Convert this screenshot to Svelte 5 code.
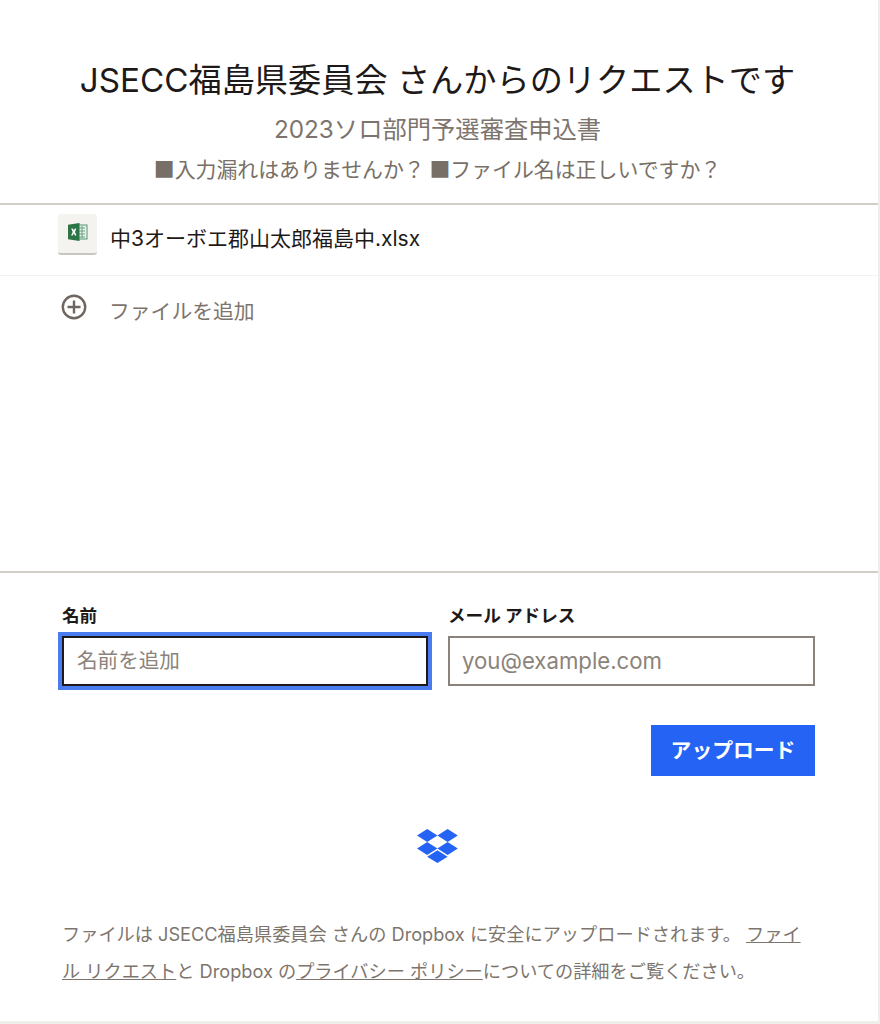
<script lang="ts">
  const fileName = "中3オーボエ郡山太郎福島中.xlsx";
</script>

<div class="card">
  <header class="head">
    <h1>JSECC福島県委員会 さんからのリクエストです</h1>
    <h2>2023ソロ部門予選審査申込書</h2>
    <p>■入力漏れはありませんか？ ■ファイル名は正しいですか？</p>
  </header>

  <section class="files">
    <div class="file-row">
      <div class="file-icon">
        <svg width="20" height="18" viewBox="0 0 20 18">
          <rect x="8" y="2" width="11" height="14" fill="#e9f0ea" stroke="#2f7d4f" stroke-width="0.8" />
          <path d="M11 5h6M11 8h6M11 11h6M11 14h6M14 3v12" stroke="#5f9c78" stroke-width="0.9" fill="none" />
          <path d="M0 1.8 11.5 0v18L0 16.2z" fill="#2a7445" />
          <path d="M3.2 5.5h1.6l1 2 1-2h1.5L7 9l1.5 3.5H6.9l-1.1-2.2-1.1 2.2H3.1L4.7 9z" fill="#fff" />
        </svg>
      </div>
      <span class="file-name">{fileName}</span>
    </div>
    <button class="add-row" type="button">
      <svg class="plus" width="26" height="26" viewBox="0 0 26 26" fill="none" stroke="#6f675f" stroke-width="2.4">
        <circle cx="13" cy="13" r="11.2" />
        <path d="M13 6.5v13M6.5 13h13" />
      </svg>
      <span>ファイルを追加</span>
    </button>
  </section>

  <section class="form">
    <div class="fields">
      <label class="field">
        <span>名前</span>
        <input class="focused" type="text" placeholder="名前を追加" />
      </label>
      <label class="field">
        <span>メール アドレス</span>
        <input class="email" type="text" placeholder="you@example.com" />
      </label>
    </div>
    <div class="actions">
      <button class="upload" type="button">アップロード</button>
    </div>
    <div class="logo">
      <svg width="41" height="34" viewBox="0 0 41 34" fill="#2563f5">
        <path d="M10.2 0 20.4 6.5 10.2 13 0 6.5z" />
        <path d="M30.6 0 40.8 6.5 30.6 13 20.4 6.5z" />
        <path d="M10.2 13 20.4 19.5 10.2 26 0 19.5z" />
        <path d="M30.6 13 40.8 19.5 30.6 26 20.4 19.5z" />
        <path d="M20.4 21.2 30.6 27.7 20.4 34 10.2 27.7z" />
      </svg>
    </div>
    <p class="note">
      ファイルは JSECC福島県委員会 さんの Dropbox に安全にアップロードされます。 <a href="#terms">ファイル リクエスト</a>と Dropbox の<a href="#privacy">プライバシー ポリシー</a>についての詳細をご覧ください。
    </p>
  </section>
</div>

<style>
  :global(body) {
    margin: 0;
    background: #fff;
    font-family: "Inter", "Noto Sans CJK JP", sans-serif;
  }
  .card {
    box-sizing: border-box;
    width: 880px;
    height: 1024px;
    border-right: 2px solid #f0eeea;
    border-bottom: 3px solid #f0eeea;
    display: flex;
    flex-direction: column;
    color: #1e1919;
  }
  .head {
    height: 205px;
    box-sizing: border-box;
    padding: 58px 3px 0 0;
    border-bottom: 2px solid #d2cfc8;
    text-align: center;
  }
  h1 {
    margin: 0;
    font-size: 33.2px;
    line-height: 44px;
    font-weight: 400;
  }
  h2 {
    margin: 10px 0 0;
    font-size: 24.3px;
    line-height: 34px;
    font-weight: 400;
    color: #7d756d;
  }
  .head p {
    margin: 8px 0 0;
    font-family: "Noto Sans CJK JP", sans-serif;
    font-size: 20.9px;
    line-height: 28px;
    color: #786f66;
  }
  .files {
    flex: 0 0 368px;
    box-sizing: border-box;
    border-bottom: 2px solid #d2cfc8;
    padding-left: 58px;
  }
  .file-row {
    display: flex;
    align-items: center;
    gap: 13px;
    height: 71px;
    margin-left: -58px;
    padding: 0 0 11px 58px;
    box-sizing: border-box;
    border-bottom: 1px solid #f3f2ef;
  }
  .file-icon {
    box-sizing: border-box;
    width: 39px;
    height: 41px;
    background: #f5f3ef;
    border-bottom: 2px solid #c9c6bf;
    border-radius: 3px;
    display: flex;
    justify-content: center;
    padding-top: 9px;
  }
  .file-name {
    font-size: 21px;
    line-height: 30px;
    padding-top: 8px;
  }
  .add-row {
    display: flex;
    align-items: flex-start;
    gap: 23px;
    padding: 18px 0 0 3px;
    border: 0;
    background: none;
    font: inherit;
    font-size: 20.8px;
    color: #7d756d;
  }
  .add-row span {
    margin-left: -1px;
    line-height: 36px;
  }
  .form {
    flex: 1;
    padding: 32px 63px 0 62px;
  }
  .fields {
    display: grid;
    grid-template-columns: 366px 367px;
    column-gap: 20px;
  }
  .field {
    display: flex;
    flex-direction: column;
    gap: 9px;
  }
  .field span {
    font-size: 17.6px;
    line-height: 22px;
    font-weight: 700;
  }
  input {
    box-sizing: border-box;
    width: 100%;
    height: 50px;
    padding: 0 13px 2px;
    border: 2px solid #8b837b;
    border-radius: 0;
    outline: none;
    font: inherit;
    font-size: 20.6px;
    color: #1e1919;
  }
  input::placeholder {
    color: #8b837b;
    opacity: 1;
  }
  .email {
    padding-left: 12px;
    font-size: 22.2px;
  }
  .focused {
    border: 2px solid #1e1919;
    box-shadow: 0 0 0 4px #4a7bf0;
  }
  .actions {
    display: flex;
    justify-content: flex-end;
    margin-top: 39px;
  }
  .upload {
    width: 164px;
    height: 51px;
    padding: 0 0 4px;
    border: 0;
    background: #2563f5;
    color: #fff;
    font: inherit;
    font-size: 20.8px;
    font-weight: 700;
  }
  .logo {
    display: flex;
    justify-content: center;
    margin: 53px 0 0 -2px;
    height: 34px;
  }
  .note {
    margin: 53px 0 0;
    font-size: 18.2px;
    line-height: 37px;
    color: #7d756d;
  }
  .note a {
    color: inherit;
  }
</style>
